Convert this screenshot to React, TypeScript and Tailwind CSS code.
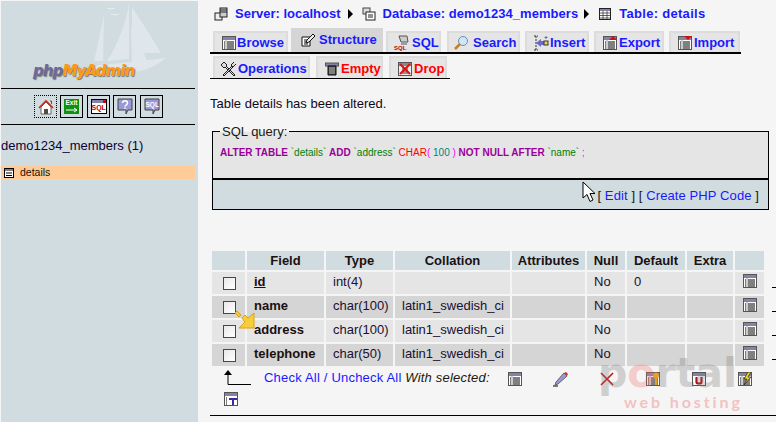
function TableIcon({ className = "" }: { className?: string }) {
  return (
    <svg viewBox="0 0 14 14" className={"h-[14px] w-[14px] " + className}>
      <rect x="0.5" y="0.5" width="13" height="13" fill="#fff" stroke="#555" />
      <rect x="1" y="1" width="12" height="3" fill="#8482a8" />
      <path d="M2 6h1M2 8h1M2 10h1M2 12h1" stroke="#000" />
      <path d="M5 6h7M5 8h7M5 10h7M5 12h7" stroke="#000" />
      <path d="M4 4v9" stroke="#999" />
    </svg>
  );
}

function Tab({
  label,
  icon,
  left,
  width,
  red,
}: {
  label: string;
  icon: React.ReactNode;
  left: number;
  width: number;
  red?: boolean;
}) {
  return (
    <div
      className={"absolute flex h-full items-center border-x-2 border-t-2 border-[#dcdcdc] bg-[#e5e5e5] pt-[1px] text-[13px] font-bold " + (red ? "text-[#ff0000]" : "text-[#1a1aff]")}
      style={{ left, width }}
    >
      {icon}
      <span className="ml-[1px]">{label}</span>
    </div>
  );
}

function Row({ name, type, coll, def, dark, underline }: { name: string; type: string; coll?: string; def?: string; dark?: boolean; underline?: boolean }) {
  const bg = dark ? "bg-[#d5d5d5]" : "bg-[#e5e5e5]";
  const cell = "flex items-center " + bg;
  return (
    <div className="grid h-[22px] grid-cols-[33px_77px_67px_115px_73px_38px_58px_46px_29px_10px] gap-x-[2px] text-[13px] leading-[15px] text-[#1a1030]">
      <div className={cell + " justify-center pl-[2px]"}>
        <div className="h-[13px] w-[13px] border border-[#1c5180] bg-gradient-to-br from-[#e8e8e8] to-white" />
      </div>
      <div className={cell + " pb-[3px] pl-[7px] font-bold text-[#1a1010] " + (underline ? "underline" : "")}>{name}</div>
      <div className={cell + " pb-[3px] pl-[7px]"}>{type}</div>
      <div className={cell + " pb-[3px] pl-[7px]"}>{coll}</div>
      <div className={cell} />
      <div className={cell + " pb-[3px] pl-[7px]"}>No</div>
      <div className={cell + " pb-[3px] pl-[7px]"}>{def}</div>
      <div className={cell} />
      <div className={cell + " justify-center pb-[4px]"}>
        <TableIcon />
      </div>
      <div className="ml-[6px] mt-[6px] h-[10px] w-[4px] self-start border-b border-black" />
    </div>
  );
}

function ToolBtn({ left, children, dotted }: { left: number; children: React.ReactNode; dotted?: boolean }) {
  return (
    <div
      className={"absolute top-[95px] flex h-[23px] w-[23px] items-center justify-center border border-black " + (dotted ? "border-dotted" : "")}
      style={{ left }}
    >
      {children}
    </div>
  );
}

export default function App() {
  return (
    <div className="relative h-[422px] w-[776px] overflow-hidden bg-[#f5f5f5] font-[family-name:Liberation_Sans,Arial,sans-serif]">
      {/* left frame */}
      <div className="absolute left-[1px] top-[1px] h-[421px] w-[197px] overflow-hidden bg-[#d0dce0]">
        <svg viewBox="0 0 197 90" className="absolute left-0 top-0 h-[90px] w-[197px]">
          <g fill="#dfe7ea">
            <path d="M128 1 C126 20 116 45 106 60 L128 58 Z" />
            <path d="M131 6 C140 20 152 38 160 52 L131 52 Z" />
            <path d="M103 14 C100 28 96 48 93 60 L102 60 Z" />
            <path d="M130 26 C136 36 142 50 146 60 L131 62 Z" />
            <path d="M92 65 L165 57 C155 65 145 70 128 72 L100 72 Z" />
          </g>
          <path d="M106 7 l4 1 l4 -1 M110 13 l4 1 l4 -1" stroke="#e8eef0" fill="none" />
        </svg>
        <div className="absolute left-[32px] top-[60px] font-[family-name:DejaVu_Sans,sans-serif] text-[15px] font-bold italic leading-[20px] tracking-[-0.9px] [text-shadow:1px_1px_1px_#777]">
          <span className="text-[#6a6a9c]">php</span>
          <span className="text-[#ff9a10]">MyAdmin</span>
        </div>
        <div className="absolute left-0 top-[87px] h-[1px] w-[194px] bg-black" />
        <div className="absolute left-0 top-[123px] h-[1px] w-[194px] bg-black" />
      </div>
      <ToolBtn left={34} dotted>
        <svg viewBox="0 0 16 16" className="h-[16px] w-[16px]">
          <path d="M3 8v7h10V8L8 3Z" fill="#fff" stroke="#666" />
          <path d="M1 9L8 2L15 9" fill="none" stroke="#d02818" strokeWidth="1.6" />
          <path d="M12 2h1.5v3" fill="none" stroke="#555" />
          <rect x="6" y="10" width="4" height="5" fill="#5a4a3a" />
        </svg>
      </ToolBtn>
      <ToolBtn left={60}>
        <div className="flex h-[15px] w-[15px] flex-col items-center bg-[#109010] text-[6.5px] font-bold leading-[8px] text-white">
          Exit
          <svg viewBox="0 0 14 6" className="h-[6px] w-[14px]">
            <path d="M1 3h11M9 1l3 2l-3 2" stroke="#fff" fill="none" />
          </svg>
        </div>
      </ToolBtn>
      <ToolBtn left={87}>
        <div className="relative h-[15px] w-[16px] border border-black bg-white pt-[3px] text-center text-[7px] font-bold leading-[10px] text-[#c00000]">
          <div className="absolute left-0 top-0 h-[3px] w-full bg-[#8482a8]" />
          <div className="absolute right-0 top-0 h-[3px] w-[3px] bg-[#e00000]" />
          SQL
        </div>
      </ToolBtn>
      <ToolBtn left={113}>
        <svg viewBox="0 0 16 17" className="h-[17px] w-[16px]">
          <path d="M1 1h14v11H11l-2 4v-4H1Z" fill="#9a98d8" stroke="#444" />
          <path d="M5.5 5c0-3 5-3 5 0c0 2-2.5 2-2.5 3.500M8 9.500v1.500" fill="none" stroke="#fff" strokeWidth="1.5" />
        </svg>
      </ToolBtn>
      <ToolBtn left={140}>
        <div className="relative h-[17px] w-[16px]">
          <svg viewBox="0 0 16 17" className="absolute left-0 top-0 h-[17px] w-[16px]">
            <path d="M1 1h14v11H11l-2 4v-4H1Z" fill="#9a98d8" stroke="#444" />
          </svg>
          <span className="absolute left-[2px] top-[2px] text-[6.5px] font-bold leading-[9px] text-white">SQL</span>
        </div>
      </ToolBtn>
      <div className="absolute left-[1px] top-[138px] text-[13px] leading-[16px] text-[#100030]">demo1234_members (1)</div>
      <div className="absolute left-[1px] top-[166px] flex h-[13px] w-[194px] items-center bg-[#ffcc99] pl-[3px] text-[10.5px] text-[#201000]">
        <svg viewBox="0 0 10 10" className="h-[10px] w-[10px]">
          <rect x="0.5" y="0.5" width="9" height="9" fill="#fff" stroke="#000" />
          <path d="M1 2h8M2 5h6M2 7.5h6" stroke="#000" />
        </svg>
        <span className="ml-[6px]">details</span>
      </div>

      {/* breadcrumb */}
      <div className="absolute left-[214px] top-[6px] flex h-[16px] items-center text-[13px] font-bold text-[#1a1aff]">
        <svg viewBox="0 0 14 14" className="h-[14px] w-[14px]">
          <rect x="1" y="6" width="7" height="7" fill="#eee" stroke="#222" />
          <rect x="6" y="1" width="7" height="9" fill="#ccc" stroke="#222" />
          <path d="M6 3h7M6 5h7" stroke="#222" />
        </svg>
        <span className="ml-[7px]">Server: localhost</span>
        <span className="ml-[7px] h-0 w-0 border-y-[5px] border-l-[5px] border-y-transparent border-l-black" />
        <svg viewBox="0 0 14 14" className="ml-[9px] h-[14px] w-[14px]">
          <rect x="1" y="1" width="7" height="6" fill="#ddd" stroke="#444" />
          <rect x="4" y="5" width="9" height="8" fill="#fff" stroke="#222" />
          <path d="M6 8h5M6 10h5" stroke="#222" />
        </svg>
        <span className="ml-[7px] tracking-[0.05px]">Database: demo1234_members</span>
        <span className="ml-[6px] h-0 w-0 border-y-[5px] border-l-[5px] border-y-transparent border-l-black" />
        <svg viewBox="0 0 12 12" className="ml-[10px] h-[12px] w-[12px]">
          <rect x="0.5" y="0.5" width="11" height="11" fill="#fff" stroke="#222" />
          <rect x="1" y="1" width="10" height="2" fill="#8482a8" />
          <path d="M1 5h10M1 7.5h10M1 10h10M4 3v8M8 3v8" stroke="#222" strokeWidth="0.7" />
        </svg>
        <span className="ml-[8px] tracking-[0.3px]">Table: details</span>
      </div>

      {/* tabs, first row */}
      <div className="absolute left-0 top-[31px] h-[21px] w-[776px]">
        <Tab left={213} width={75} label="Browse" icon={<TableIcon className="ml-[7px]" />} />
        <div className="absolute left-[291px] top-[-3px] flex h-[24px] w-[92px] items-center bg-[#d5d5d5] pb-[1px] text-[13px] font-bold text-[#1a1aff]">
          <svg viewBox="0 0 16 16" className="ml-[9px] h-[16px] w-[16px]">
            <path d="M2 5h8v9H2Z" fill="#fff" stroke="#111" />
            <path d="M4 8h4M4 10h4M4 12h4" stroke="#111" />
            <path d="M7 8l6-6l2 2l-6 6l-3 1Z" fill="#eee" stroke="#111" />
          </svg>
          <span className="ml-[3px]">Structure</span>
        </div>
        <Tab left={386} width={55} label="SQL" icon={
          <div className="relative ml-[6px] mr-[1px] h-[16px] w-[16px]">
            <svg viewBox="0 0 16 16" className="h-[16px] w-[16px]">
              <path d="M5 1h8l1 6H7Z" fill="#ccc" stroke="#555" />
              <path d="M8 8v2M10 8v2M12 8v2" stroke="#555" />
            </svg>
            <span className="absolute bottom-0 left-0 text-[6px] font-bold leading-[6px] text-[#c00000]">SQL</span>
          </div>
        } />
        <Tab left={447} width={73} label="Search" icon={
          <svg viewBox="0 0 16 16" className="ml-[4px] mr-[3px] h-[16px] w-[16px]">
            <circle cx="10" cy="6" r="4.5" fill="#cfe6fa" stroke="#6a90b0" />
            <path d="M7 9l-5 5" stroke="#c88020" strokeWidth="2.5" />
          </svg>
        } />
        <Tab left={525} width={64} label="Insert" icon={
          <svg viewBox="0 0 16 16" className="ml-[6px] h-[16px] w-[16px]">
            <path d="M1 1h4M1 15h4M3 1v14" stroke="#333" strokeDasharray="2 1" />
            <path d="M3 8l5-4v2h3v4H8v2Z" fill="#6a6ac8" />
            <rect x="11" y="6" width="4" height="4" fill="#f0d060" stroke="#333" />
            <path d="M13 1v3M11.5 2.5h3" stroke="#6a6ac8" />
          </svg>
        } />
        <Tab left={594} width={70} label="Export" icon={
          <div className="relative ml-[7px] mr-[1px] h-[14px] w-[14px]">
            <TableIcon />
            <span className="absolute right-0 top-0 h-0 w-0 border-x-[4px] border-b-[4px] border-x-transparent border-b-[#d01010]" />
          </div>
        } />
        <Tab left={669} width={71} label="Import" icon={
          <div className="relative ml-[7px] mr-[1px] h-[14px] w-[14px]">
            <TableIcon />
            <span className="absolute right-0 top-0 h-0 w-0 border-x-[4px] border-t-[4px] border-x-transparent border-t-[#d01010]" />
          </div>
        } />
      </div>
      <div className="absolute left-[210px] top-[52px] h-[2px] w-[531px] bg-black" />

      {/* tabs, second row */}
      <div className="absolute left-0 top-[56px] h-[22px] w-[776px]">
        <Tab left={213} width={97} label="Operations" icon={
          <svg viewBox="0 0 16 16" className="ml-[6px] h-[16px] w-[16px]">
            <path d="M3 1l3 3l-1 1l9 9l-1 1l-9-9l-1 1l-3-3Z" fill="#ddd" stroke="#222" />
            <path d="M13 1l-3 3l2 2l3-3M11 5l-9 9l1 1l9-9" fill="#ddd" stroke="#222" />
          </svg>
        } />
        <Tab left={316} width={67} label="Empty" red icon={
          <svg viewBox="0 0 14 14" className="ml-[7px] mr-[1px] h-[14px] w-[14px]">
            <rect x="0.5" y="1" width="13" height="3" fill="#8482a8" stroke="#555" />
            <path d="M3 4h8v9H3Z" fill="#444" stroke="#111" />
            <path d="M5 5v7M7 5v7M9 5v7" stroke="#bbb" />
          </svg>
        } />
        <Tab left={389} width={58} label="Drop" red icon={
          <svg viewBox="0 0 14 14" className="ml-[7px] mr-[1px] h-[14px] w-[14px]">
            <rect x="0.5" y="0.5" width="13" height="13" fill="#eee" stroke="#555" />
            <rect x="1" y="1" width="12" height="3" fill="#8a8a8a" />
            <path d="M4 7h6M4 9h6M4 11h6" stroke="#333" />
            <path d="M2 2l10 10M12 2L2 12" stroke="#e01010" strokeWidth="2" />
          </svg>
        } />
      </div>
      <div className="absolute left-[210px] top-[78px] h-[1px] w-[240px] bg-black" />

      <p className="absolute left-[210px] top-[96px] text-[13px] leading-[15px] text-[#100818]">Table details has been altered.</p>

      {/* sql query box */}
      <div className="absolute left-[212px] top-[131px] h-[79px] w-[557px] border border-black bg-[#e5e5e5]">
        <div className="absolute left-[7px] top-[-8px] px-[2px] text-[13px] leading-[15px] text-[#201810] [background:linear-gradient(#f5f5f5_50%,#e5e5e5_50%)]">SQL query:</div>
        <div className="absolute left-[7px] top-[15px] text-[10px] leading-[12px] whitespace-pre">
          <span className="font-bold text-[#990099]">ALTER TABLE</span>
          <span className="text-[#008000]"> `details` </span>
          <span className="font-bold text-[#990099]">ADD</span>
          <span className="text-[#008000]"> `address` </span>
          <span className="text-[#ff0000]">CHAR</span>
          <span className="text-[#ff00ff]">( </span>
          <span className="text-[#008080]">100 </span>
          <span className="text-[#ff00ff]">) </span>
          <span className="font-bold text-[#990099]">NOT NULL AFTER</span>
          <span className="text-[#008000]"> `name` </span>
          <span className="text-[#ff00ff]">;</span>
        </div>
        <div className="absolute bottom-0 left-0 right-0 flex h-[31px] items-center justify-end border-t-2 border-black bg-[#d0dce0] pr-[9px] pt-[2px] text-[13px] tracking-[0.1px] text-[#201810]">
          [&nbsp;<span className="text-[#1a1aff]">Edit</span>&nbsp;] [&nbsp;<span className="text-[#1a1aff]">Create PHP Code</span>&nbsp;]
        </div>
      </div>

      {/* mouse cursor */}
      <svg viewBox="0 0 14 22" className="absolute left-[582px] top-[181px] h-[22px] w-[14px]">
        <path d="M1 1V17L5 13.5L8 20.5L11 19L8 12.5H13Z" fill="#fff" stroke="#000" />
      </svg>

      {/* structure table */}
      <div className="absolute left-[212px] top-[251px] w-[564px]">
        <div className="mb-[2px] grid h-[19px] grid-cols-[33px_77px_67px_115px_73px_38px_58px_46px_29px] gap-x-[2px] text-center text-[13px] font-bold leading-[19px] text-[#1a1010]">
          <div className="bg-[#d0dce0]" />
          <div className="bg-[#d0dce0]">Field</div>
          <div className="bg-[#d0dce0]">Type</div>
          <div className="bg-[#d0dce0]">Collation</div>
          <div className="bg-[#d0dce0]">Attributes</div>
          <div className="bg-[#d0dce0]">Null</div>
          <div className="bg-[#d0dce0]">Default</div>
          <div className="bg-[#d0dce0]">Extra</div>
          <div className="bg-[#d0dce0]" />
        </div>
        <div className="flex flex-col gap-y-[2px]">
          <Row name="id" type="int(4)" def="0" underline />
          <Row name="name" type="char(100)" coll="latin1_swedish_ci" dark />
          <Row name="address" type="char(100)" coll="latin1_swedish_ci" />
          <Row name="telephone" type="char(50)" coll="latin1_swedish_ci" dark />
        </div>
      </div>

      {/* yellow arrow */}
      <svg viewBox="0 0 22 22" className="absolute left-[234px] top-[309px] h-[22px] w-[22px]">
        <path d="M1 4l2-2l4 4l-2 2Z" fill="#f5c830" stroke="#d8a020" />
        <path d="M8 9l3-3l3 3l6-5v15H5l6-6Z" fill="#f7cd3a" stroke="#d8a020" />
      </svg>

      {/* footer row */}
      <svg viewBox="0 0 28 16" className="absolute left-[223px] top-[369px] h-[16px] w-[28px]">
        <path d="M5 4V15.5H28" stroke="#000" fill="none" strokeWidth="1" />
        <path d="M1 6L5 1L9 6Z" fill="#000" />
      </svg>
      <div className="absolute left-[264px] top-[370px] text-[13px] leading-[15px] tracking-[0.2px] text-[#1a1aff]">
        Check All / Uncheck All <i className="text-[#201810]">With selected:</i>
      </div>
      <TableIcon className="absolute left-[508px] top-[372px]" />
      <svg viewBox="0 0 16 16" className="absolute left-[553px] top-[371px] h-[16px] w-[16px]">
        <path d="M3 11l8-9l3 3l-9 8l-3 1Z" fill="#9a98d8" stroke="#665" />
        <path d="M11 2l3 3l1-2l-2-2Z" fill="#e03020" />
        <path d="M0 15h5" stroke="#000" />
      </svg>
      <svg viewBox="0 0 14 14" className="absolute left-[600px] top-[372px] h-[14px] w-[14px]">
        <path d="M1 1l12 12M13 1L1 13" stroke="#d01010" strokeWidth="1.6" />
      </svg>
      <div className="absolute left-[646px] top-[372px] h-[14px] w-[14px]">
        <TableIcon />
        <svg viewBox="0 0 14 14" className="absolute left-0 top-0 h-[14px] w-[14px]">
          <circle cx="10" cy="3.5" r="3" fill="#e8a020" />
          <path d="M9 5h2v8H9Z" fill="#e8a020" />
        </svg>
      </div>
      <div className="absolute left-[692px] top-[372px] h-[14px] w-[14px]">
        <TableIcon />
        <svg viewBox="0 0 14 14" className="absolute left-0 top-0 h-[14px] w-[14px]">
          <rect x="1" y="4" width="12" height="9" fill="#fff" />
          <path d="M4.5 5v5c0 2 5 2 5 0V5" stroke="#b01010" strokeWidth="2.2" fill="none" />
        </svg>
      </div>
      <div className="absolute left-[738px] top-[372px] h-[14px] w-[14px]">
        <TableIcon />
        <svg viewBox="0 0 14 14" className="absolute left-0 top-0 h-[14px] w-[14px]">
          <path d="M10 0L6 7h3l-3 6l7-8h-3l3-5Z" fill="#f0d020" stroke="#222" strokeWidth="0.7" />
        </svg>
      </div>
      <svg viewBox="0 0 14 14" className="absolute left-[224px] top-[392px] h-[14px] w-[14px]">
        <rect x="0.5" y="0.5" width="13" height="13" fill="#fff" stroke="#555" />
        <rect x="1" y="1" width="12" height="3" fill="#8482a8" />
        <path d="M2 6h1M2 8h1M2 10h1M2 12h1" stroke="#000" />
        <path d="M5 6h8v2h-3v5H8V8H5Z" fill="#3a2a9a" />
      </svg>
      <div className="absolute left-[210px] top-[415px] h-[1px] w-[566px] bg-black" />

      {/* watermark */}
      <div className="pointer-events-none absolute left-[598px] top-[353px] font-[family-name:DejaVu_Sans,sans-serif] text-[41px] font-bold leading-[41px] text-[#7a7a7a] opacity-30">
        p<span className="text-[#f07070]">o</span>rtal
      </div>
      <div className="pointer-events-none absolute left-[624px] top-[392px] font-[family-name:Lato,sans-serif] text-[16px] font-bold leading-[20px] tracking-[2.9px] text-[#f09090] opacity-50">
        web hosting
      </div>
    </div>
  );
}
